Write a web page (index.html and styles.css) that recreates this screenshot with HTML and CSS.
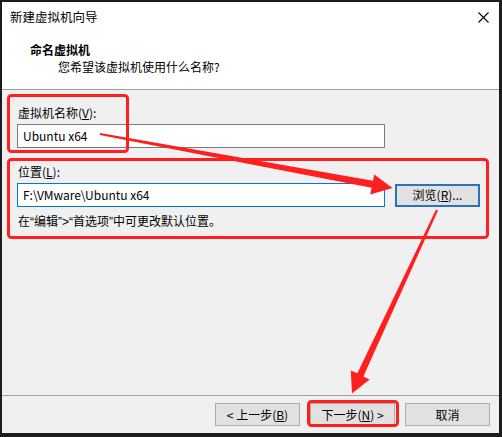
FILE: index.html
```html
<!DOCTYPE html>
<html lang="zh-CN">
<head>
<meta charset="utf-8">
<title>新建虚拟机向导</title>
<link rel="stylesheet" href="styles.css">
</head>
<body>
<div class="window">
  <div class="header">
    <div class="titlebar">
      <span class="title">新建虚拟机向导</span>
      <svg class="close" width="11" height="11" viewBox="0 0 11 11"><path d="M0.5 0.5 L10.5 10.5 M10.5 0.5 L0.5 10.5" stroke="#000" stroke-width="1.1" fill="none"/></svg>
    </div>
    <div class="heading">命名虚拟机</div>
    <div class="subtitle">您希望该虚拟机使用什么名称?</div>
  </div>
  <div class="body">
    <div class="label first">虚拟机名称(<u>V</u>):</div>
    <div class="input">Ubuntu x64</div>
    <div class="label second">位置(<u>L</u>):</div>
    <div class="row">
      <div class="input focused">F:\VMware\Ubuntu x64</div>
      <div class="btn default">浏览(<u>R</u>)...</div>
    </div>
    <div class="hint">在<span class="q">“</span>编辑<span class="q">”&gt;“</span>首选项<span class="q">”</span>中可更改默认位置。</div>
  </div>
  <div class="footer">
    <div class="btn">&lt; 上一步(<u>B</u>)</div>
    <div class="btn">下一步(<u>N</u>) &gt;</div>
    <div class="btn">取消</div>
  </div>
</div>
<svg class="overlay" width="502" height="437" viewBox="0 0 502 437">
  <g fill="none" stroke="#ff1f1f" stroke-width="3">
    <rect x="8.5" y="95.5" width="119" height="56" rx="3"/>
    <rect x="8.5" y="159.5" width="479" height="78" rx="3"/>
    <rect x="308.5" y="401.5" width="89" height="24" rx="3"/>
  </g>
  <g fill="#ff1f1f">
    <polygon points="100.2,133.1 373,180.8 374.2,174.6 392.5,188 370.3,194.4 371.6,187.8 99.8,135.1"/>
    <polygon points="436,209.5 357.4,373.3 350.8,370.4 352,393.5 369.6,379.4 363.4,376.4 438,210.5"/>
  </g>
</svg>
</body>
</html>
```
FILE: styles.css
```css
html, body {
  margin: 0;
  padding: 0;
}
body {
  width: 502px;
  height: 437px;
  background: #1c1c1c;
  font-family: "Noto Sans CJK SC", "Noto Sans", sans-serif;
  font-size: 12px;
  color: #000;
  position: relative;
  overflow: hidden;
}
.window {
  position: relative;
  top: 2px;
  left: 2px;
  width: 497px;
  height: 431px;
  background: #f0f0f0;
  display: flex;
  flex-direction: column;
}
.header {
  height: 87px;
  background: #fff;
  border-bottom: 1px solid #a0a0a0;
}
.titlebar {
  height: 30px;
  display: flex;
  align-items: center;
  justify-content: space-between;
  padding: 0 10px 0 8px;
}
.title {
  font-size: 12.5px;
  line-height: 16px;
}
.heading {
  margin-top: 10px;
  padding-left: 28px;
  font-weight: bold;
  line-height: 16px;
}
.subtitle {
  margin-top: 1px;
  padding-left: 56px;
  line-height: 16px;
}
.body {
  flex: 1;
  padding: 0 15px;
  display: flex;
  flex-direction: column;
  align-items: flex-start;
}
.label {
  line-height: 16px;
  padding-left: 1px;
}
.label.first { margin-top: 15px; }
.label.second { margin-top: 16px; }
.input {
  box-sizing: border-box;
  width: 368px;
  height: 24px;
  margin-top: 3px;
  background: #fff;
  border: 1px solid #7a7a7a;
  padding: 0 5px;
  line-height: 22px;
  white-space: nowrap;
}
.input.focused {
  border-color: #0078d7;
  margin-top: 0;
}
.row {
  margin-top: 3px;
  display: flex;
  align-items: center;
  gap: 10px;
}
.btn {
  box-sizing: border-box;
  width: 85px;
  height: 23px;
  background: #e1e1e1;
  border: 1px solid #adadad;
  display: flex;
  align-items: center;
  justify-content: center;
  line-height: 16px;
  white-space: nowrap;
}
.btn.default {
  border: 2px solid #2b72bd;
}
.hint {
  margin-top: 6px;
  line-height: 16px;
  padding-left: 1px;
}
.q {
  font-family: "Liberation Sans", sans-serif;
}
.footer {
  height: 38px;
  border-top: 1px solid #a0a0a0;
  display: flex;
  justify-content: flex-end;
  align-items: flex-start;
  gap: 10px;
  padding: 7px 9px 0 0;
  box-sizing: border-box;
}
.overlay {
  position: absolute;
  top: 0;
  left: 0;
  pointer-events: none;
}
```
